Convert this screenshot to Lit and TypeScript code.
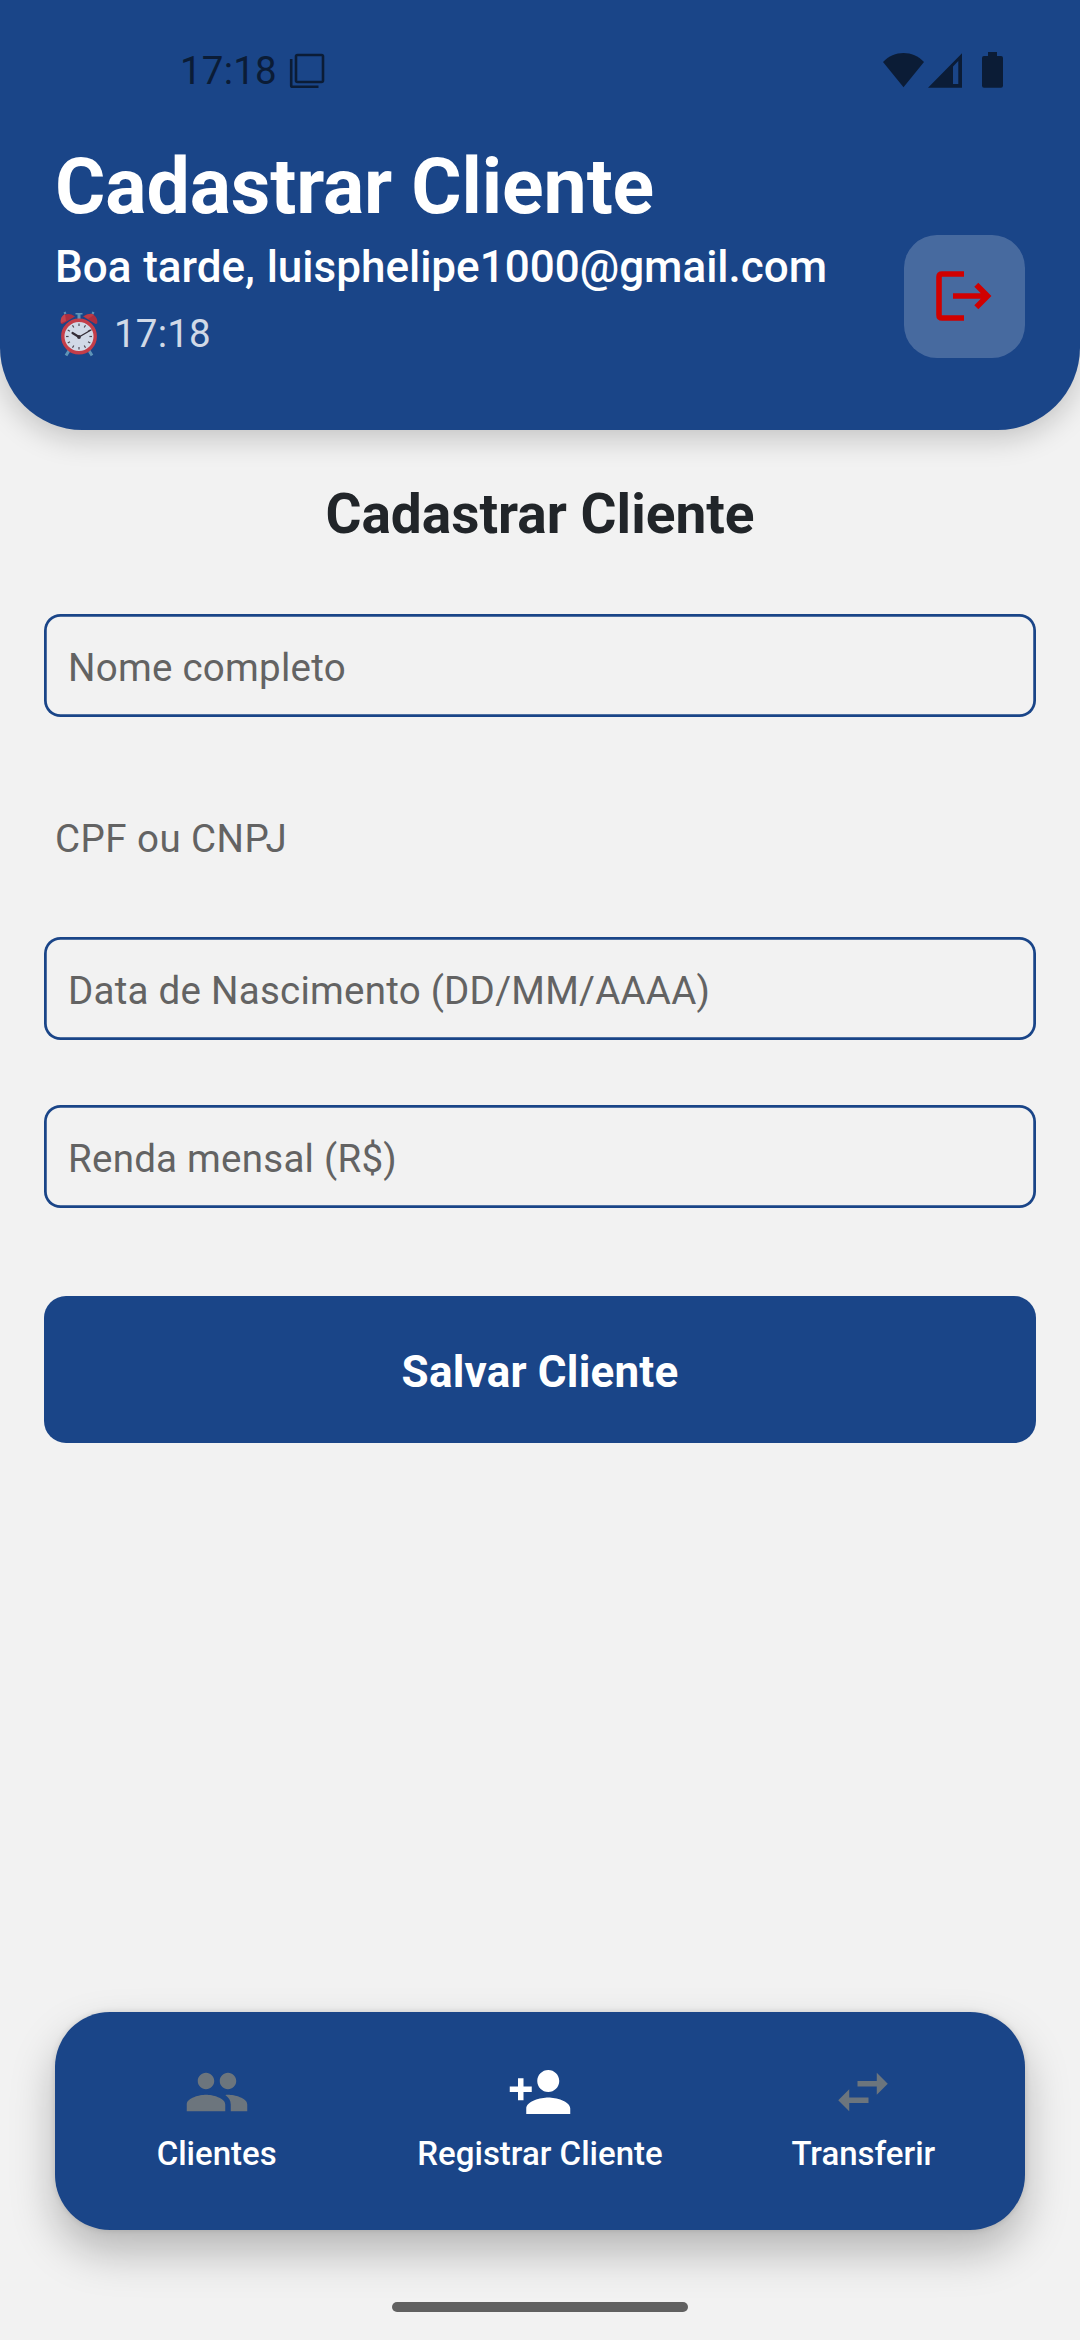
import { LitElement, html, css, svg } from "lit";
import { customElement } from "lit/decorators.js";

const NAV = [
  {
    label: "Clientes",
    active: false,
    path: "M16 11c1.66 0 2.99-1.34 2.99-3S17.66 5 16 5c-1.66 0-3 1.34-3 3s1.34 3 3 3zm-8 0c1.66 0 2.99-1.34 2.99-3S9.66 5 8 5C6.34 5 5 6.34 5 8s1.34 3 3 3zm0 2c-2.33 0-7 1.17-7 3.5V19h14v-2.5c0-2.33-4.67-3.5-7-3.5zm8 0c-.29 0-.62.02-.97.05 1.16.84 1.97 1.97 1.97 3.45V19h6v-2.5c0-2.33-4.67-3.5-7-3.5z",
  },
  {
    label: "Registrar Cliente",
    active: true,
    path: "M15 12c2.21 0 4-1.79 4-4s-1.79-4-4-4-4 1.79-4 4 1.79 4 4 4zm-9-2V7H4v3H1v2h3v3h2v-3h3v-2H6zm9 4c-2.67 0-8 1.34-8 4v2h16v-2c0-2.66-5.33-4-8-4z",
  },
  {
    label: "Transferir",
    active: false,
    path: "M6.99 11L3 15l3.99 4v-3H14v-2H6.99v-3zM21 9l-3.99-4v3H10v2h7.01v3L21 9z",
  },
];

const TICKS = Array.from({ length: 12 }, (_, i) => i * 30);

@customElement("app-root")
export class AppRoot extends LitElement {
  static styles = css`
    :host {
      display: flex;
      flex-direction: column;
      width: 1080px;
      height: 2340px;
      overflow: hidden;
      background: #f2f2f2;
      font-family: Roboto, "Liberation Sans", sans-serif;
      color: #212529;
    }
    svg {
      display: block;
    }
    .header {
      box-sizing: border-box;
      height: 430px;
      flex: none;
      background: #1a4588;
      border-radius: 0 0 82.5px 82.5px;
      box-shadow: 0 8px 30px rgba(0, 0, 0, 0.2);
      color: #fff;
      display: flex;
      flex-direction: column;
    }
    .status {
      display: flex;
      align-items: center;
      justify-content: space-between;
      height: 142px;
      box-sizing: border-box;
      padding: 0 75px 0 180px;
      color: #0b1c36;
    }
    .status-left,
    .status-right {
      display: flex;
      align-items: center;
    }
    .time {
      font-size: 38.5px;
      line-height: 46px;
      letter-spacing: 0.2px;
    }
    .status-left svg {
      margin-left: 12px;
    }
    .row {
      display: flex;
      justify-content: space-between;
      align-items: flex-start;
      padding: 0 55px;
    }
    .title {
      margin: 0;
      font-size: 77px;
      line-height: 90px;
      font-weight: 700;
      letter-spacing: -0.1px;
    }
    .greet {
      font-size: 44px;
      line-height: 52px;
      font-weight: 500;
      margin-top: 9px;
      word-spacing: 0.8px;
      white-space: nowrap;
    }
    .clock {
      display: flex;
      align-items: center;
      margin-top: 18px;
      opacity: 0.8;
    }
    .clock svg {
      margin: 0 16px 0 5px;
    }
    .logout {
      display: flex;
      margin-top: 93px;
      width: 121px;
      height: 123px;
      border-radius: 33px;
      background: rgba(255, 255, 255, 0.2);
    }
    .form {
      display: flex;
      flex-direction: column;
      padding: 52px 44px 0;
    }
    .form-title {
      margin: 0 0 67px;
      font-size: 55px;
      line-height: 65px;
      font-weight: 700;
      text-align: center;
    }
    .field {
      display: flex;
      align-items: center;
      box-sizing: border-box;
      height: 103px;
      padding: 5px 24px 0;
      border-radius: 16.5px;
      box-shadow: inset 0 0 0 2.75px #1a4588;
      font-size: 38.5px;
      line-height: 46px;
      letter-spacing: 0.25px;
      color: #636363;
    }
    .plain {
      box-shadow: none;
      padding: 3px 11px 0;
      margin: 69px 0 48px;
      letter-spacing: 0.45px;
    }
    .income {
      margin-top: 65px;
    }
    .save {
      display: flex;
      align-items: center;
      justify-content: center;
      height: 147px;
      margin-top: 88px;
      padding: 5px 0 0;
      border: 0;
      border-radius: 22px;
      background: #1a4588;
      color: #fff;
      font: 700 44px/52px Roboto, sans-serif;
      letter-spacing: 0.2px;
    }
    .nav {
      display: grid;
      grid-template-columns: repeat(3, 1fr);
      box-sizing: border-box;
      height: 218px;
      margin: auto 55px 0;
      padding-top: 46.5px;
      border-radius: 55px;
      background: #1a4588;
      box-shadow: 0 22px 44px rgba(0, 0, 0, 0.25), 0 0 6px rgba(0, 0, 0, 0.12);
    }
    .item {
      display: flex;
      flex-direction: column;
      align-items: center;
      color: #6c757d;
    }
    .item.active {
      color: #fff;
    }
    .label {
      margin-top: 9.5px;
      color: #fff;
      font-size: 33px;
      line-height: 39px;
      font-weight: 500;
      white-space: nowrap;
    }
    .home {
      width: 296px;
      height: 10px;
      border-radius: 5px;
      background: #616161;
      margin: 72px auto 28px;
      flex: none;
    }
  `;

  private alarm() {
    return svg`<svg width="38" height="46" viewBox="0 0 38 46">
      <path d="M10 38l-4 6.500M28 38l4 6.500" stroke="#6fa8c4" stroke-width="3" />
      <path d="M4 2.500l2-1M34 2.500l-2-1" stroke="#6fa8c4" stroke-width="2" />
      <path d="M15.500 2h7v1.600h-2V8h-3V3.600h-2z" fill="#6fa8c4" />
      <path d="M.8 12.500C-.5 5 7 -.5 15 5.500L2.500 13z" fill="#d0292f" />
      <path d="M37.200 12.500C38.500 5 31 -.5 23 5.500L35.500 13z" fill="#d0292f" />
      <path d="M1 12C0 8 2 4.500 5 3l1 7z" fill="#f0433f" />
      <path d="M24 5.500C28 2.500 32 2 34 4l-6 4z" fill="#e53935" />
      <circle cx="19" cy="25.500" r="16.200" fill="#fff" stroke="#ef3c3a" stroke-width="3.400" />
      ${TICKS.map(
        (a) => svg`<path d="M19 12.500v2.600" stroke="#5d4a48" stroke-width="1.200" transform="rotate(${a} 19 25.500)" />`
      )}
      <path d="M12.500 22L19 26" stroke="#3a2724" stroke-width="2.200" stroke-linecap="round" />
      <path d="M19 26L31 19" stroke="#3a2724" stroke-width="1.400" stroke-linecap="round" />
      <circle cx="19" cy="26" r="1.900" fill="#3a2724" />
    </svg>`;
  }

  render() {
    return html`
      <header class="header">
        <div class="status">
          <div class="status-left">
            <span class="time">17:18</span>
            <svg width="36" height="36" viewBox="0 0 36 36" fill="none" stroke="currentColor" stroke-width="2.600">
              <rect x="7" y="2" width="27" height="27" rx="1.500" />
              <path d="M2.200 6v26.500q0 1.300 1.300 1.300H29.500" />
            </svg>
          </div>
          <div class="status-right">
            <svg width="122" height="38" viewBox="0 0 122 38" fill="currentColor">
              <path d="M0 10C11-2 30-2 41 10L20.500 35.300z" />
              <path fill-rule="evenodd" d="M45 35.700L79 1.200v34.500zM70 14.500v17.500h5.300V9z" />
              <path d="M105 0h9v4h4q2 0 2 2v27.700q0 2-2 2h-17q-2 0-2-2V6q0-2 2-2h4z" />
            </svg>
          </div>
        </div>
        <div class="row">
          <div>
            <h1 class="title">Cadastrar Cliente</h1>
            <div class="greet">Boa tarde, luisphelipe1000@gmail.com</div>
            <div class="clock">${this.alarm()}<span class="time">17:18</span></div>
          </div>
          <div class="logout">
            <svg width="121" height="123" viewBox="0 0 121 123" fill="none" stroke="#d00000" stroke-width="5.600">
              <path d="M60 39H38q-3 0-3 3V80q0 3 3 3H60" />
              <path d="M49 61H82M72.300 49.700L83.500 61L72.300 72.300" />
            </svg>
          </div>
        </div>
      </header>
      <main class="form">
        <h2 class="form-title">Cadastrar Cliente</h2>
        <div class="field">Nome completo</div>
        <div class="field plain">CPF ou CNPJ</div>
        <div class="field">Data de Nascimento (DD/MM/AAAA)</div>
        <div class="field income">Renda mensal (R$)</div>
        <button class="save">Salvar Cliente</button>
      </main>
      <nav class="nav">
        ${NAV.map(
          (n) => html`<div class="item ${n.active ? "active" : ""}">
            <svg width="66" height="66" viewBox="0 0 24 24" fill="currentColor"><path d=${n.path} /></svg>
            <span class="label">${n.label}</span>
          </div>`
        )}
      </nav>
      <div class="home"></div>
    `;
  }
}
